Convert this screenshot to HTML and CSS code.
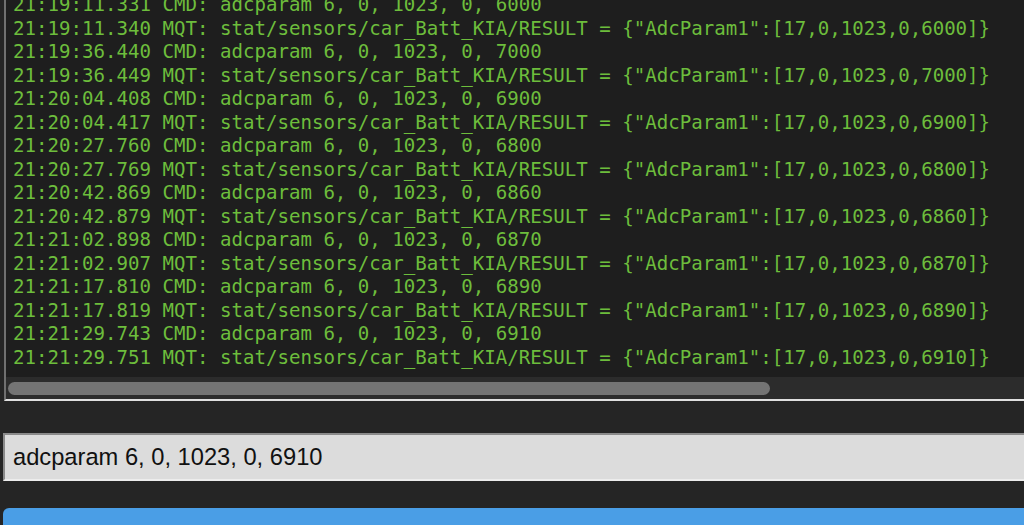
FILE: index.html
```html
<!DOCTYPE html>
<html lang="en">
<head>
    <meta charset="UTF-8">
    <meta name="viewport" content="width=device-width, initial-scale=1.0">
    <title>Console</title>
    <link rel="stylesheet" href="styles.css">
</head>
<body>
    <div class="console" id="console">
        <div class="log-view">
            <div class="log">
                <div class="line">21:18:40.102 CMD: adcparam 6, 0, 1023, 0, 5900</div>
                <div class="line">21:18:40.111 MQT: stat/sensors/car_Batt_KIA/RESULT = {"AdcParam1":[17,0,1023,0,5900]}</div>
                <div class="line">21:19:11.331 CMD: adcparam 6, 0, 1023, 0, 6000</div>
                <div class="line">21:19:11.340 MQT: stat/sensors/car_Batt_KIA/RESULT = {"AdcParam1":[17,0,1023,0,6000]}</div>
                <div class="line">21:19:36.440 CMD: adcparam 6, 0, 1023, 0, 7000</div>
                <div class="line">21:19:36.449 MQT: stat/sensors/car_Batt_KIA/RESULT = {"AdcParam1":[17,0,1023,0,7000]}</div>
                <div class="line">21:20:04.408 CMD: adcparam 6, 0, 1023, 0, 6900</div>
                <div class="line">21:20:04.417 MQT: stat/sensors/car_Batt_KIA/RESULT = {"AdcParam1":[17,0,1023,0,6900]}</div>
                <div class="line">21:20:27.760 CMD: adcparam 6, 0, 1023, 0, 6800</div>
                <div class="line">21:20:27.769 MQT: stat/sensors/car_Batt_KIA/RESULT = {"AdcParam1":[17,0,1023,0,6800]}</div>
                <div class="line">21:20:42.869 CMD: adcparam 6, 0, 1023, 0, 6860</div>
                <div class="line">21:20:42.879 MQT: stat/sensors/car_Batt_KIA/RESULT = {"AdcParam1":[17,0,1023,0,6860]}</div>
                <div class="line">21:21:02.898 CMD: adcparam 6, 0, 1023, 0, 6870</div>
                <div class="line">21:21:02.907 MQT: stat/sensors/car_Batt_KIA/RESULT = {"AdcParam1":[17,0,1023,0,6870]}</div>
                <div class="line">21:21:17.810 CMD: adcparam 6, 0, 1023, 0, 6890</div>
                <div class="line">21:21:17.819 MQT: stat/sensors/car_Batt_KIA/RESULT = {"AdcParam1":[17,0,1023,0,6890]}</div>
                <div class="line">21:21:29.743 CMD: adcparam 6, 0, 1023, 0, 6910</div>
                <div class="line">21:21:29.751 MQT: stat/sensors/car_Batt_KIA/RESULT = {"AdcParam1":[17,0,1023,0,6910]}</div>
            </div>
        </div>
        <!-- horizontal scrollbar drawn by hand, the screenshot hides native ones -->
        <div class="scrollbar">
            <div class="thumb"></div>
        </div>
    </div>

    <input type="text" class="cmd-input" id="cmdInput" value="adcparam 6, 0, 1023, 0, 6910">

    <button class="send-button" type="button">Send</button>
</body>
</html>
```

FILE: styles.css
```css
html, body {
    overflow: hidden;
}

body {
    margin: 0;
    padding: 0;
    background-color: #252525;
    font-family: 'Liberation Sans', Arial, sans-serif;
}

.console {
    box-sizing: border-box;
    width: 1040px;
    height: 401px;
    margin-left: 4px;
    background-color: #1e1e1e;
    border-left: 2px solid #707070;
    border-right: 2px solid #e0e0e0;
    border-bottom: 2px solid #e0e0e0;
    display: flex;
    flex-direction: column;
}

.log-view {
    flex: 1;
    display: flex;
    flex-direction: column;
    justify-content: flex-end;
    overflow: hidden;
}

.log {
    padding: 0 7px 8px 7px;
    font-family: 'DejaVu Sans Mono', monospace;
    font-size: 19.1px;
    line-height: 23.5px;
    color: #6dbd3c;
}

.line {
    white-space: pre;
}

.scrollbar {
    height: 22px;
    padding: 5px 2px 4px 2px;
    box-sizing: border-box;
    background-color: #2c2c2c;
}

.thumb {
    width: 762px;
    height: 100%;
    background-color: #747474;
    border-radius: 7px;
}

.cmd-input {
    display: block;
    box-sizing: border-box;
    width: 1040px;
    height: 48px;
    margin: 32px 0 0 3px;
    padding: 0 8px;
    background-color: #dcdcdc;
    border: 2px solid;
    border-color: #8a8a8a #ececec #ececec #8a8a8a;
    font-family: 'Liberation Sans', Arial, sans-serif;
    font-size: 23.7px;
    color: #111;
    outline: none;
}

.send-button {
    display: block;
    width: 1040px;
    height: 60px;
    margin: 27px 0 0 3px;
    background-color: #4a9ee6;
    border: none;
    border-radius: 6px;
    color: #ffffff;
    font-size: 20px;
}
```
